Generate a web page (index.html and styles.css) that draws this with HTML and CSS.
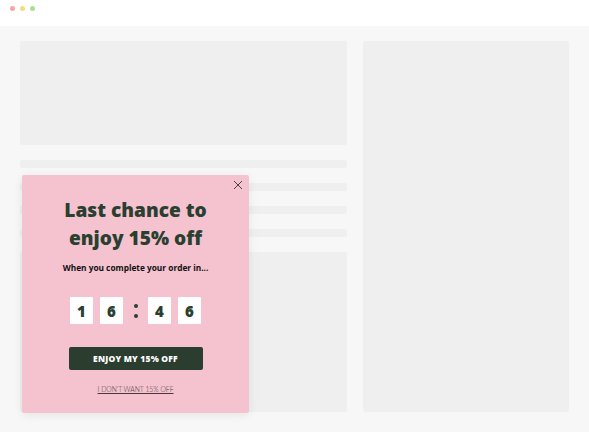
FILE: index.html
```html
<!DOCTYPE html>
<html>
<head>
<meta charset="utf-8">
<link rel="stylesheet" href="styles.css">
</head>
<body>
<div class="browser">
  <div class="topbar">
    <span class="dot red"></span>
    <span class="dot yellow"></span>
    <span class="dot green"></span>
  </div>
  <div class="page">
    <div class="col-left">
      <div class="block hero"></div>
      <div class="line"></div>
      <div class="line"></div>
      <div class="line"></div>
      <div class="line"></div>
      <div class="block rest"></div>
    </div>
    <div class="col-right">
      <div class="block side"></div>
    </div>
  </div>
  <div class="popup">
    <svg class="close" width="10" height="10" viewBox="0 0 10 10"><path d="M1 1L9 9M9 1L1 9" stroke="#444" stroke-width="1" fill="none"/></svg>
    <h1 class="title">Last chance to<br>enjoy 15% off</h1>
    <p class="subtitle">When you complete your order in...</p>
    <div class="timer">
      <span class="digit">1</span>
      <span class="digit">6</span>
      <span class="colon"><i></i><i></i></span>
      <span class="digit">4</span>
      <span class="digit">6</span>
    </div>
    <button class="cta">ENJOY MY 15% OFF</button>
    <a class="decline">I DON'T WANT 15% OFF</a>
  </div>
</div>
</body>
</html>
```
FILE: styles.css
```css
html, body {
  margin: 0;
  padding: 0;
}
body {
  width: 589px;
  height: 432px;
  background: #f7f7f7;
  font-family: "Open Sans", "Liberation Sans", sans-serif;
  overflow: hidden;
}
.browser {
  position: relative;
  width: 589px;
  height: 432px;
}
.topbar {
  height: 26px;
  background: #ffffff;
  display: flex;
  align-items: flex-start;
  gap: 5px;
  padding: 6px 0 0 10px;
  box-sizing: border-box;
}
.dot {
  width: 5px;
  height: 5px;
  border-radius: 50%;
}
.red { background: #f6a5a5; }
.yellow { background: #f8dc7c; }
.green { background: #a8e08f; }
.page {
  display: flex;
  gap: 16px;
  padding: 15px 20px 20px 20px;
  height: 432px;
  box-sizing: border-box;
  margin-top: -26px;
  padding-top: 41px;
}
.col-left {
  width: 327px;
  display: flex;
  flex-direction: column;
  gap: 15px;
}
.col-right {
  width: 206px;
  display: flex;
}
.block {
  background: #efefef;
  border-radius: 2px;
}
.hero { height: 104px; }
.line {
  height: 8px;
  background: #efefef;
  border-radius: 2px;
}
.rest { flex: 1; }
.side { flex: 1; }
.popup {
  position: absolute;
  left: 22px;
  top: 175px;
  width: 227px;
  height: 238px;
  background: #f5c2cf;
  border-radius: 2px;
  box-shadow: 0 2px 10px rgba(0,0,0,0.08);
  display: flex;
  flex-direction: column;
  align-items: center;
  box-sizing: border-box;
  padding-top: 21px;
}
.close {
  position: absolute;
  right: 6px;
  top: 5px;
}
.title {
  margin: 0;
  font-size: 19.1px;
  line-height: 28px;
  font-weight: 800;
  color: #2a3f2f;
  text-align: center;
}
.subtitle {
  margin: 10px 0 0;
  font-size: 8.3px;
  line-height: 12px;
  font-weight: 700;
  color: #111;
}
.timer {
  margin-top: 23px;
  display: flex;
  align-items: center;
  gap: 7px;
}
.digit {
  width: 23px;
  height: 27px;
  background: #ffffff;
  border-radius: 1px;
  display: flex;
  align-items: center;
  justify-content: center;
  font-size: 15px;
  font-weight: 800;
  color: #2a3f2f;
}
.colon {
  width: 11px;
  height: 27px;
  display: flex;
  flex-direction: column;
  align-items: center;
  justify-content: center;
  gap: 6px;
}
.colon i {
  width: 4px;
  height: 4px;
  border-radius: 50%;
  background: #2a3f2f;
}
.cta {
  margin-top: 23px;
  width: 134px;
  height: 23px;
  background: #2b3d2f;
  color: #ffffff;
  border: 0;
  border-radius: 2px;
  font-family: "Open Sans", "Liberation Sans", sans-serif;
  font-size: 8.5px;
  font-weight: 800;
  letter-spacing: 0.2px;
  padding: 0;
}
.decline {
  margin-top: 14px;
  font-family: "Lato", "Liberation Sans", sans-serif;
  font-size: 6.8px;
  line-height: 10px;
  font-weight: 300;
  color: #4a3a40;
  text-decoration: underline;
}
```
